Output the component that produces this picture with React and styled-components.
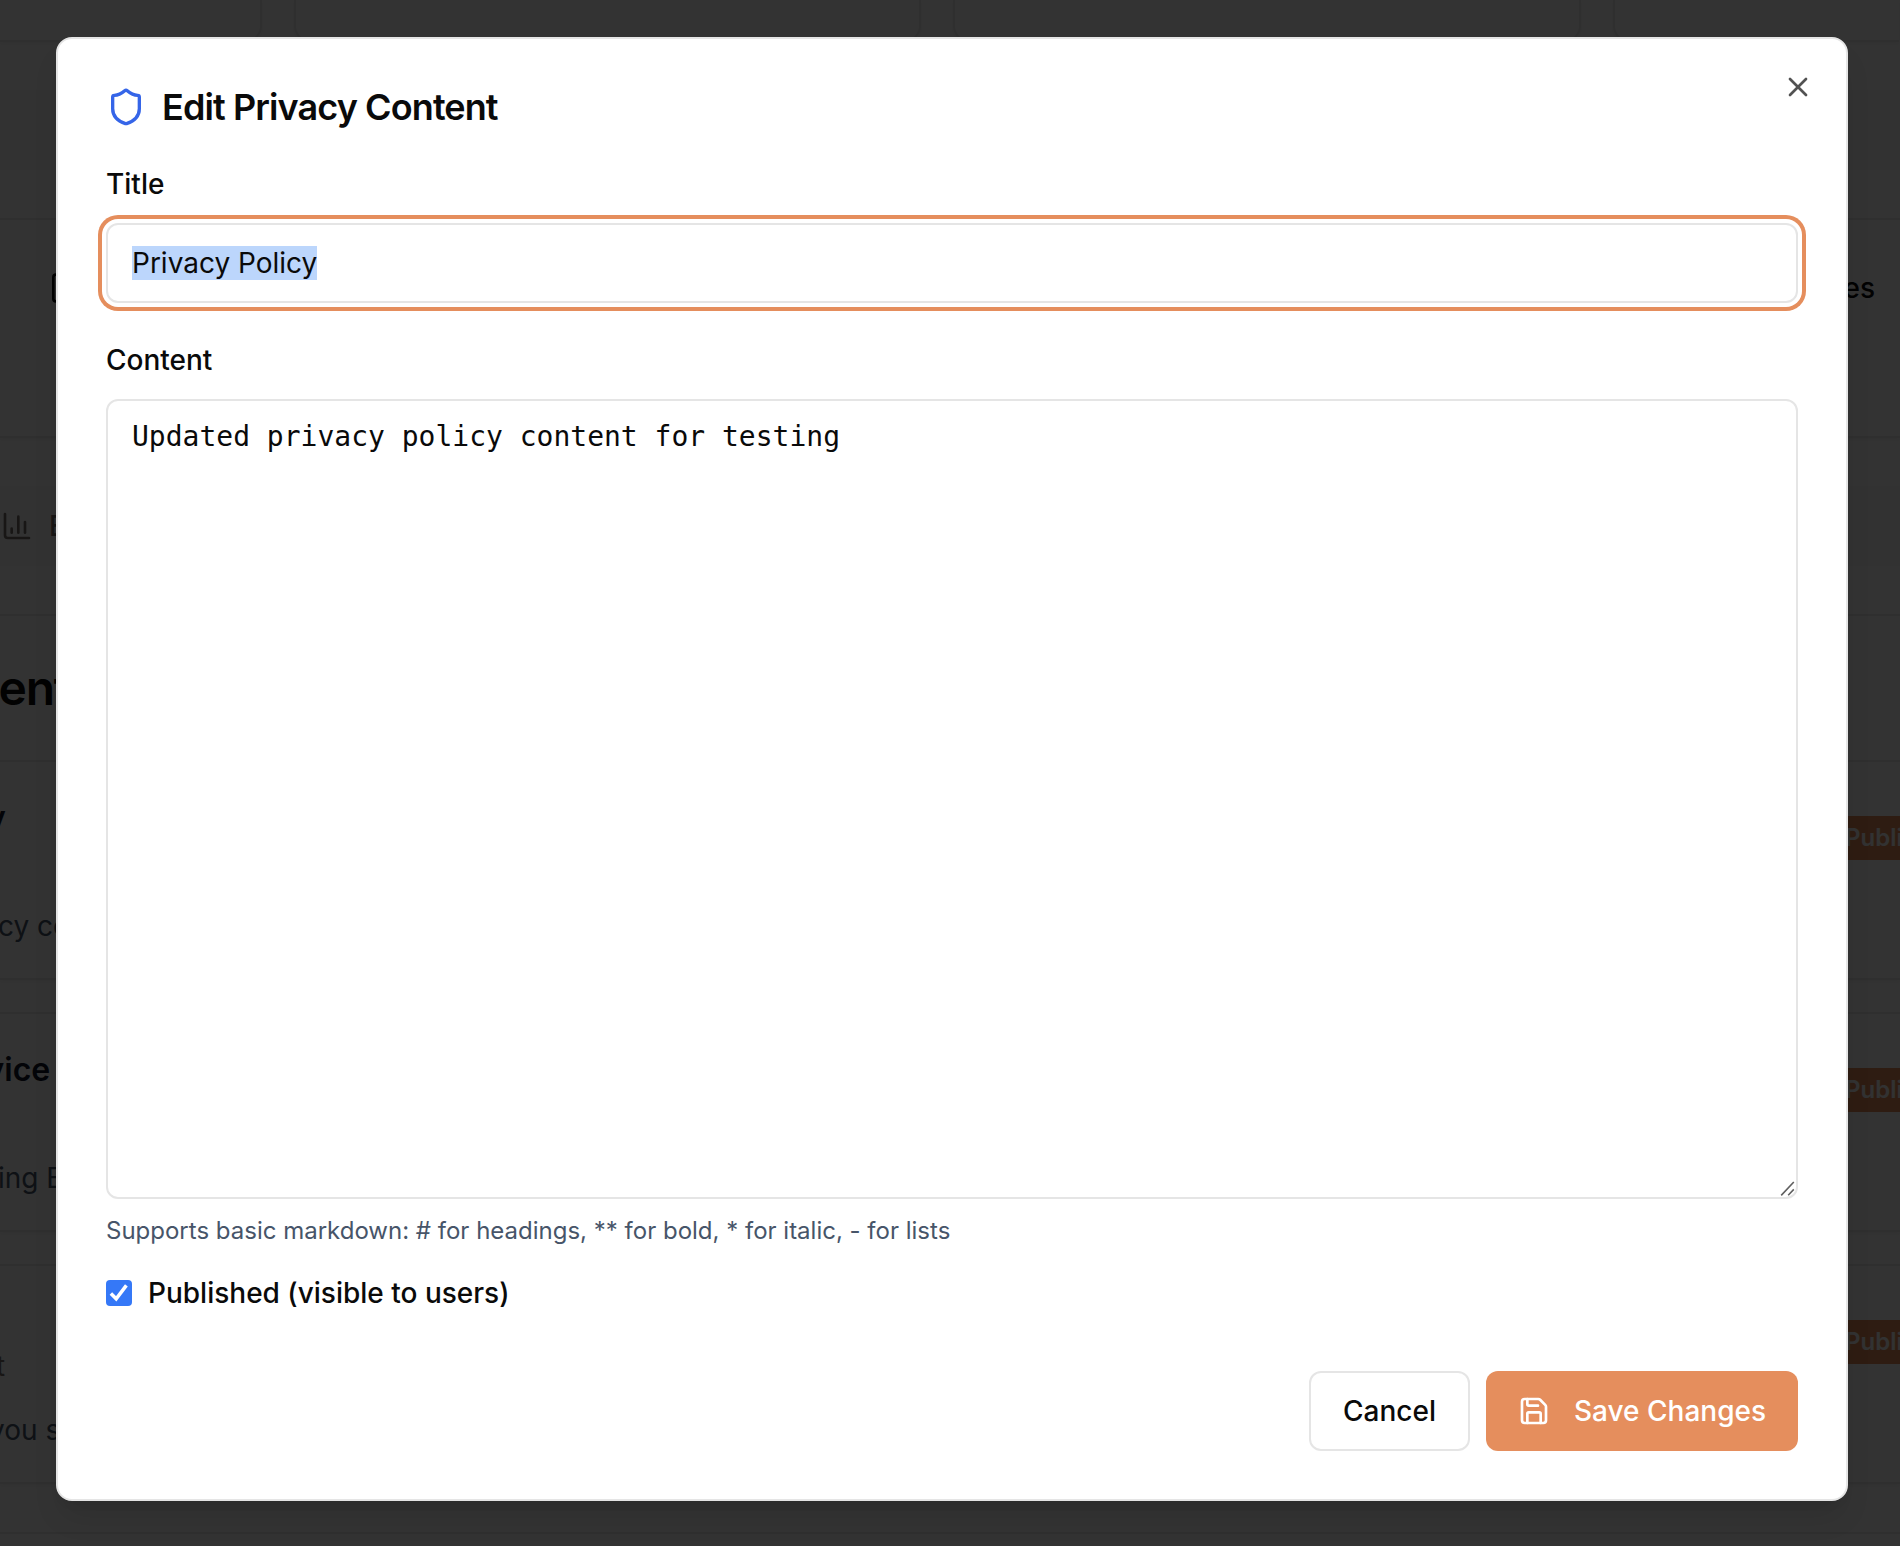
import React, { useEffect, useRef } from "react";
import styled, { createGlobalStyle } from "styled-components";
import { Shield, X, Save, ChartColumn, FileText } from "lucide-react";

const Global = createGlobalStyle`
  * { box-sizing: border-box; }
  body { margin: 0; background: #fff; color: #0a0a0a; font-family: Inter, "Liberation Sans", sans-serif; font-size: 32px; line-height: 48px; overflow: hidden; }
  #root { height: 1546px; }
`;

const Screen = styled.div`
  position: relative;
  width: 1900px;
  height: 1546px;
  overflow: hidden;
`;

const Page = styled.div`
  display: flex;
  flex-direction: column;
  height: 100%;
  background: #fff;
`;

const StatStrip = styled.div`
  height: 42px;
  flex: none;
  display: grid;
  grid-template-columns: 262px 627px 628px 286px;
  column-gap: 32px;
`;

const StatCard = styled.div`
  height: 42px;
  border: solid #e8e8e8;
  border-width: 0 2px 2px;
  border-radius: 0 0 16px 16px;
  box-shadow: 0 2px 4px rgba(0, 0, 0, 0.05);
  &:first-child { border-left: 0; border-bottom-left-radius: 0; }
  &:last-child { border-right: 0; border-bottom-right-radius: 0; }
`;

const Gap = styled.div`
  height: 48px;
  flex: none;
`;

const QuickPanel = styled.div`
  height: 220px;
  flex: none;
  display: flex;
  align-items: center;
  justify-content: space-between;
  padding: 0 25px 80px 48px;
  border: solid #e8e8e8;
  border-width: 2px 0;
  box-shadow: 0 2px 4px rgba(0, 0, 0, 0.05);
  font-size: 28px;
  font-weight: 500;
`;

const TabBar = styled.div`
  height: 80px;
  flex: none;
  display: flex;
  align-items: center;
  gap: 16px;
  padding-left: 1px;
  background: #fafafa;
  color: #78716c;
  font-size: 28px;
  font-weight: 500;
`;

const Manager = styled.div`
  flex: none;
  height: 146px;
  padding-top: 48px;
  border-top: 2px solid #e8e8e8;
  font-size: 48px;
  font-weight: 600;
  letter-spacing: -1.2px;
  text-indent: -1.5px;
`;

const Doc = styled.div`
  flex: none;
  height: 220px;
  margin-bottom: ${(p) => (p.$last ? 48 : 32)}px;
  display: flex;
  justify-content: space-between;
  border: solid #e8e8e8;
  border-width: 2px 0;
  box-shadow: 0 2px 4px rgba(0, 0, 0, 0.05);
`;

const PanelEnd = styled.div`
  flex: none;
  height: 2px;
  background: #e8e8e8;
`;

const DocText = styled.div`
  display: flex;
  flex-direction: column;
`;

const DocTitle = styled.div`
  margin-top: ${(p) => p.$top}px;
  margin-left: ${(p) => p.$x}px;
  height: 40px;
  line-height: 40px;
  font-size: ${(p) => (p.$small ? 28 : 32)}px;
  font-weight: ${(p) => (p.$small ? 400 : 600)};
  color: ${(p) => (p.$small ? "#78716c" : "#0f172a")};
`;

const DocLine = styled.div`
  margin-top: ${(p) => p.$top}px;
  margin-left: ${(p) => p.$x}px;
  height: 40px;
  line-height: 40px;
  font-size: 28px;
  white-space: nowrap;
  color: #475569;
`;

const Badge = styled.div`
  margin-top: 54px;
  width: 60px;
  height: 44px;
  padding-left: 5px;
  overflow: hidden;
  background: #e58e5d;
  color: #fafafa;
  font-size: 24px;
  font-weight: 600;
  line-height: 44px;
`;

const Overlay = styled.div`
  position: absolute;
  inset: 0;
  display: flex;
  justify-content: center;
  align-items: flex-start;
  padding: 37px 0 0 4px;
  background: rgba(0, 0, 0, 0.8);
`;

const Dialog = styled.div`
  position: relative;
  width: 1792px;
  height: 1464px;
  display: flex;
  flex-direction: column;
  gap: 32px;
  padding: 48px;
  border: 2px solid #e5e5e5;
  border-radius: 16px;
  background: #fff;
  box-shadow: 0 20px 30px -6px rgba(0, 0, 0, 0.1), 0 8px 12px -8px rgba(0, 0, 0, 0.1);
`;

const CloseButton = styled.button`
  position: absolute;
  top: 32px;
  right: 32px;
  width: 32px;
  height: 32px;
  padding: 0;
  border: 0;
  background: none;
  color: #0a0a0a;
  opacity: 0.7;
`;

const Heading = styled.h2`
  display: flex;
  align-items: center;
  gap: 16px;
  height: 40px;
  margin: 0;
  font-size: 36px;
  font-weight: 600;
  line-height: 36px;
  letter-spacing: -0.9px;
`;

const Field = styled.div`
  display: flex;
  flex-direction: column;
`;

const Label = styled.label`
  height: 50px;
  margin-bottom: 14px;
  font-size: 28px;
  font-weight: 500;
  line-height: 50px;
`;

const TextInput = styled.input`
  height: 80px;
  padding: 0 24px;
  border: 2px solid #e5e5e5;
  border-radius: 12px;
  outline: none;
  background: #fff;
  box-shadow: 0 0 0 4px #fff, 0 0 0 8px #e58e5d;
  color: #0a0a0a;
  font: 400 28px/40px Inter, "Liberation Sans", sans-serif;
  &::selection { background: #bcd6fc; color: #0a0a0a; }
`;

const TextAreaWrap = styled.div`
  position: relative;
  height: 800px;
`;

const TextArea = styled.textarea`
  display: block;
  width: 100%;
  height: 800px;
  padding: 16px 24px;
  border: 2px solid #e5e5e5;
  border-radius: 12px;
  outline: none;
  resize: none;
  background: #fff;
  color: #0a0a0a;
  font: 400 28px/40px "DejaVu Sans Mono", monospace;
`;

const Grip = styled.svg`
  position: absolute;
  right: 3px;
  bottom: 3px;
`;

const Hint = styled.p`
  margin: 16px 0 0;
  font-size: 24px;
  line-height: 32px;
  color: #475569;
`;

const CheckRow = styled.div`
  display: flex;
  align-items: center;
  gap: 16px;
  height: 28px;
  font-size: 28px;
  font-weight: 500;
  line-height: 28px;
`;

const CheckBox = styled.span`
  display: flex;
  width: 26px;
  height: 26px;
  border-radius: 4px;
  background: #3578f7;
`;

const Footer = styled.div`
  display: flex;
  justify-content: flex-end;
  gap: 16px;
  padding-top: 32px;
`;

const Button = styled.button`
  display: flex;
  align-items: center;
  justify-content: center;
  gap: 24px;
  width: ${(p) => p.$w}px;
  height: 80px;
  padding: 0;
  border: ${(p) => (p.$primary ? "0" : "2px solid #e5e5e5")};
  border-radius: 12px;
  background: ${(p) => (p.$primary ? "#e58e5d" : "#fff")};
  color: ${(p) => (p.$primary ? "#fff" : "#0a0a0a")};
  font: 500 28px/40px Inter, "Liberation Sans", sans-serif;
  white-space: nowrap;
`;

export default function App() {
  const title = useRef(null);
  useEffect(() => {
    title.current.focus();
    title.current.select();
  }, []);
  return (
    <Screen>
      <Global />
      <Page aria-hidden="true">
        <StatStrip>
          <StatCard /><StatCard /><StatCard /><StatCard />
        </StatStrip>
        <Gap />
        <TabBar />
        <Gap />
        <QuickPanel>
          <FileText size={32} />
          <span>es</span>
        </QuickPanel>
        <Gap />
        <TabBar>
          <ChartColumn size={32} />
          <span>E</span>
        </TabBar>
        <Gap />
        <Manager>ent</Manager>
        <Doc>
          <DocText>
            <DocTitle $top={36} $x={-13}>y</DocTitle>
            <DocLine $top={68} $x={-2}>cy co</DocLine>
          </DocText>
          <Badge>Publi</Badge>
        </Doc>
        <Doc>
          <DocText>
            <DocTitle $top={36} $x={-14.5}>vice</DocTitle>
            <DocLine $top={68} $x={-2}>ing E</DocLine>
          </DocText>
          <Badge>Publi</Badge>
        </Doc>
        <Doc $last>
          <DocText>
            <DocTitle $top={80} $x={-4} $small>t</DocTitle>
            <DocLine $top={24} $x={-11}>you s</DocLine>
          </DocText>
          <Badge>Publi</Badge>
        </Doc>
        <PanelEnd />
      </Page>
      <Overlay>
        <Dialog role="dialog">
          <Heading>
            <Shield size={40} color="#3565e8" />
            Edit Privacy Content
          </Heading>
          <Field>
            <Label>Title</Label>
            <TextInput ref={title} defaultValue="Privacy Policy" />
          </Field>
          <Field>
            <Label>Content</Label>
            <TextAreaWrap>
              <TextArea spellCheck={false} defaultValue="Updated privacy policy content for testing" />
              <Grip width="16" height="16" viewBox="0 0 16 16" fill="none" stroke="#606060" strokeWidth="1.6">
                <path d="M2.2 15.4 14.8 2M9.2 15.2l5.6-5.8" />
              </Grip>
            </TextAreaWrap>
            <Hint>Supports basic markdown: # for headings, ** for bold, * for italic, - for lists</Hint>
          </Field>
          <CheckRow>
            <CheckBox>
              <svg width="26" height="26" viewBox="0 0 26 26" fill="none" stroke="#fff" strokeWidth="3.5">
                <path d="m4.9 13.4 5.3 5.4L20.4 5.4" />
              </svg>
            </CheckBox>
            Published (visible to users)
          </CheckRow>
          <Footer>
            <Button $w={161}>Cancel</Button>
            <Button $w={312} $primary>
              <Save size={32} />
              Save Changes
            </Button>
          </Footer>
          <CloseButton aria-label="Close">
            <X size={32} />
          </CloseButton>
        </Dialog>
      </Overlay>
    </Screen>
  );
}
